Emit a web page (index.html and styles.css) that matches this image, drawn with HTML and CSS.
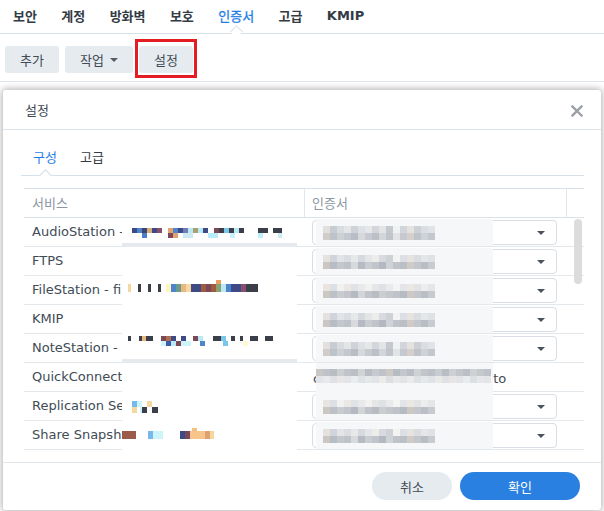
FILE: index.html
```html
<!DOCTYPE html>
<html lang="ko">
<head>
<meta charset="utf-8">
<title>인증서 설정</title>
<link rel="stylesheet" href="styles.css">
</head>
<body>
<div class="page">
  <nav class="topnav">
    <span class="tab">보안</span>
    <span class="tab">계정</span>
    <span class="tab">방화벽</span>
    <span class="tab">보호</span>
    <span class="tab active">인증서</span>
    <span class="tab">고급</span>
    <span class="tab">KMIP</span>
  </nav>
  <div class="toolbar">
    <button class="tbtn w54">추가</button>
    <button class="tbtn w68">작업 <span class="caret-sm"></span></button>
    <button class="tbtn w54 marked">설정</button>
  </div>

  <div class="dialog">
    <div class="dlg-head">
      <span class="dlg-title">설정</span>
      <svg class="close" width="12" height="12" viewBox="0 0 12 12"><path d="M1.5 1.5L10.5 10.5M10.5 1.5L1.5 10.5" stroke="#9aa0a6" stroke-width="2.4" stroke-linecap="square"/></svg>
    </div>
    <div class="dlg-body">
      <div class="subtabs">
        <span class="stab active">구성</span>
        <span class="stab">고급</span>
      </div>
      <div class="grid">
        <div class="thead">
          <div class="c1 th">서비스</div>
          <div class="c2 th">인증서</div>
          <div class="c3"></div>
        </div>
        <div class="tbody">
          <div class="row"><div class="c1">AudioStation -</div><div class="c2"><div class="select"><span class="blur b1"></span><span class="arrow"></span></div></div><div class="c3"></div></div>
          <div class="row"><div class="c1">FTPS</div><div class="c2"><div class="select"><span class="blur b2"></span><span class="arrow"></span></div></div><div class="c3"></div></div>
          <div class="row"><div class="c1">FileStation - fi</div><div class="c2"><div class="select"><span class="blur b3"></span><span class="arrow"></span></div></div><div class="c3"></div></div>
          <div class="row"><div class="c1">KMIP</div><div class="c2"><div class="select"><span class="blur b2"></span><span class="arrow"></span></div></div><div class="c3"></div></div>
          <div class="row"><div class="c1">NoteStation -</div><div class="c2"><div class="select"><span class="blur b1"></span><span class="arrow"></span></div></div><div class="c3"></div></div>
          <div class="row"><div class="c1">QuickConnect</div><div class="c2 plain">c<span class="blur bq"></span>to</div><div class="c3"></div></div>
          <div class="row"><div class="c1">Replication Se</div><div class="c2"><div class="select"><span class="blur b3"></span><span class="arrow"></span></div></div><div class="c3"></div></div>
          <div class="row"><div class="c1">Share Snapsh</div><div class="c2"><div class="select"><span class="blur b2"></span><span class="arrow"></span></div></div><div class="c3"></div></div>

          <div class="mask">
            <span class="px p-audio"></span>
            <span class="band band-audio"></span>
            <span class="px p-file"></span>
            <span class="px p-note"></span>
            <span class="band band-note"></span>
            <span class="px p-repl"></span>
            <span class="px p-share"></span>
          </div>
          <div class="scrollbar"></div>
        </div>
      </div>
    </div>
    <div class="dlg-foot">
      <button class="pill cancel">취소</button>
      <button class="pill ok">확인</button>
    </div>
  </div>
</div>
</body>
</html>
```

FILE: styles.css
```css
* { box-sizing: border-box; }
html, body { margin: 0; padding: 0; }
body {
  width: 604px;
  height: 511px;
  overflow: hidden;
  background: #fff;
  font-family: "DejaVu Sans", "Noto Sans CJK KR", sans-serif;
  font-size: 13px;
  color: #414b55;
}
.page { position: relative; width: 604px; height: 511px; }

/* top tabs */
.topnav {
  height: 34px;
  border-bottom: 1px solid #d9e1e8;
  display: flex;
  align-items: center;
  gap: 24.4px;
  padding: 0 0 2px 13px;
  font-weight: bold;
  font-family: "Noto Sans CJK KR", "DejaVu Sans", sans-serif;
}
.tab { position: relative; color: #333b45; line-height: 18px; }
.topnav .tab:last-child { font-family: "DejaVu Sans", sans-serif; }
.tab.active { color: #1f7ee6; font-weight: normal; -webkit-text-stroke: 0.3px #1f7ee6; }
.tab.active::after {
  content: "";
  position: absolute;
  left: 50%;
  bottom: -11px;
  width: 8px;
  height: 8px;
  margin-left: -4px;
  background: #fff;
  border-left: 1px solid #d9e1e8;
  border-top: 1px solid #d9e1e8;
  transform: rotate(45deg);
}

/* toolbar */
.toolbar {
  display: flex;
  gap: 6px;
  padding: 12px 0 8px 5px;
  border-bottom: 1px solid #dfe4ea;
}
.tbtn {
  height: 27px;
  padding: 0;
  border: 0;
  border-radius: 3px;
  background: #e6ebf0;
  color: #414b55;
  font-family: "Noto Sans CJK KR", sans-serif;
  font-size: 13px;
  display: inline-flex;
  align-items: center;
  justify-content: center;
  gap: 4px;
}
.w54 { width: 54px; }
.w68 { width: 68px; }
.caret-sm {
  display: inline-block;
  border-left: 4px solid transparent;
  border-right: 4px solid transparent;
  border-top: 4px solid #555c66;
  margin-left: 2px;
}
.marked { position: relative; }
.marked::after {
  content: "";
  position: absolute;
  left: -4px;
  right: -4px;
  top: -7px;
  bottom: -5px;
  border: 3px solid #e41d25;
}

/* dialog */
.dialog {
  position: absolute;
  left: 3px;
  top: 90px;
  width: 598px;
  height: 420px;
  background: #fff;
  border-radius: 3px;
  box-shadow: 0 0 7px 1px rgba(0, 0, 0, 0.32);
  display: flex;
  flex-direction: column;
}
.dlg-head {
  height: 40px;
  border-bottom: 1px solid #dde4ea;
  display: flex;
  align-items: center;
  justify-content: space-between;
  padding: 0 18px 0 22px;
  flex: none;
}
.dlg-title { font-family: "Noto Sans CJK KR", sans-serif; font-size: 13px; color: #3e4650; }
.close { display: block; margin-top: 2px; }

.dlg-body {
  flex: 1;
  padding: 0 17px 0 18px;
  border-bottom: 1px solid #e1e6eb;
}
.subtabs {
  display: flex;
  align-items: flex-start;
  gap: 23px;
  padding: 18px 0 0 12px;
  height: 46px;
  border-bottom: 1px solid #d6e1ea;
  font-family: "Noto Sans CJK KR", sans-serif;
  font-size: 13px;
  line-height: 18px;
  color: #333b45;
}
.stab { position: relative; }
.stab.active { color: #1f7ee6; }
.stab.active::after {
  content: "";
  position: absolute;
  left: 50%;
  bottom: -14px;
  width: 8px;
  height: 8px;
  margin-left: -4px;
  background: #fff;
  border-left: 1px solid #cfdbe6;
  border-top: 1px solid #cfdbe6;
  transform: rotate(45deg);
}

.grid {
  margin: 12px 0 0 3px;
  border-top: 1px solid #d9e1e8;
}
.thead, .row {
  display: grid;
  grid-template-columns: 281px 262px 17px;
  height: 29px;
  border-bottom: 1px solid #e3e8ed;
}
.thead { border-bottom-color: #d9e1e8; }
.thead .c1, .thead .c2 { border-right: 1px solid #e1e7ec; }
.th {
  font-family: "Noto Sans CJK KR", sans-serif;
  color: #8c97a3;
  padding-left: 8px;
  line-height: 28px;
}
.th.c2 { padding-left: 7px; }
.tbody { position: relative; }
.row .c1 {
  padding-left: 8px;
  line-height: 28px;
  white-space: nowrap;
  overflow: hidden;
}
.row .c2 { display: flex; align-items: center; padding-left: 7px; }
.row .c2.plain { padding-left: 8px; line-height: 28px; white-space: nowrap; }

.select {
  position: relative;
  width: 245px;
  height: 25px;
  border: 1px solid #d8dee4;
  border-radius: 4px;
  background: #fff;
}
.arrow {
  position: absolute;
  right: 11px;
  top: 10px;
  border-left: 4px solid transparent;
  border-right: 4px solid transparent;
  border-top: 4px solid #4a525c;
}

/* redaction blocks */
.blur {
  position: absolute;
  left: 3px;
  top: -2px;
  width: 177px;
  height: 27px;
  background-color: #f5f7f9;
  background-repeat: no-repeat;
  background-size: 112px 7px, 112px 7px;
  background-position: 7px 7px, 7px 14px;
}
.b1 {
  background-image:
    linear-gradient(90deg, #e2dfdc 0 7px, #c7ccd3 7px 14px, #d8dbdf 14px 21px, #e4e5e7 21px 28px, #cfd3d8 28px 35px, #dde0e4 35px 42px, #e6e7e8 42px 49px, #d3d6da 49px 56px, #e3e4e6 56px 63px, #c5c9cf 63px 70px, #f0f1f2 70px 77px, #d2d5da 77px 84px, #e6e2de 84px 91px, #cdd1d6 91px 98px, #dadde1 98px 105px, #e2e3e6 105px 112px),
    linear-gradient(90deg, #d0ccc8 0 7px, #bec3ca 7px 14px, #cdd0d5 14px 21px, #c3c7ce 21px 28px, #b9bec6 28px 35px, #d6d8dc 35px 42px, #c7cad0 42px 49px, #bcc1c8 49px 56px, #d3d5d9 56px 63px, #c0c5cc 63px 70px, #e2e3e5 70px 77px, #c6c9cf 77px 84px, #d5d0cb 84px 91px, #bfc3ca 91px 98px, #cfd2d7 98px 105px, #c4c8ce 105px 112px);
}
.b2 {
  background-image:
    linear-gradient(90deg, #e6e1dc 0 7px, #d1d5db 7px 14px, #e2e4e7 14px 21px, #dadde1 21px 28px, #e7e8ea 28px 35px, #d6d9de 35px 42px, #e3e5e7 42px 49px, #ecece9 49px 56px, #d7dade 56px 63px, #ced2d7 63px 70px, #f3f3f4 70px 77px, #dcdfe3 77px 84px, #e7e3df 84px 91px, #d9dce0 91px 98px, #e5e6e8 98px 105px, #dfe1e4 105px 112px),
    linear-gradient(90deg, #cbc6c1 0 7px, #b8bdc5 7px 14px, #c4c8cd 14px 21px, #bec2c9 21px 28px, #d7d9dc 28px 35px, #b6bbc3 35px 42px, #c9ccd1 42px 49px, #c1c5cb 49px 56px, #b4b9c1 56px 63px, #cfd2d6 63px 70px, #c0c4ca 70px 77px, #bbc0c7 77px 84px, #d0cbc6 84px 91px, #c3c7cd 91px 98px, #b9bec5 98px 105px, #c8cbd0 105px 112px);
}
.b3 {
  background-image:
    linear-gradient(90deg, #e9e4df 0 7px, #dcdfe3 7px 14px, #f1f1f2 14px 21px, #eae7e4 21px 28px, #e0e2e5 28px 35px, #e8e9ea 35px 42px, #f2f1ef 42px 49px, #e5e6e8 49px 56px, #dfe1e4 56px 63px, #e9eaeb 63px 70px, #f4f4f5 70px 77px, #e3e5e8 77px 84px, #ebe7e3 84px 91px, #e1e3e6 91px 98px, #eceded 98px 105px, #e4e6e8 105px 112px),
    linear-gradient(90deg, #cdc7c1 0 7px, #bcc1c8 7px 14px, #c8cbd0 14px 21px, #c2c6cc 21px 28px, #b5bac2 28px 35px, #d2d4d7 35px 42px, #c0c4ca 42px 49px, #b8bdc4 49px 56px, #cbcdd1 56px 63px, #c4c8cd 63px 70px, #bfc3c9 70px 77px, #b6bbc3 77px 84px, #cdc8c3 84px 91px, #c3c6cc 91px 98px, #babfc6 98px 105px, #c7cacf 105px 112px);
}
.blur.bq {
  position: relative;
  display: inline-block;
  left: 0;
  top: 0;
  width: 177px;
  height: 32px;
  vertical-align: middle;
  margin-left: -4px;
  background-size: 175px 7px, 175px 7px;
  background-position: 0 6px, 0 13px;
  background-image:
    linear-gradient(90deg, #c9c6c3 0 7px, #bfc3c9 7px 14px, #b8bdc4 14px 21px, #ccced2 21px 28px, #c1c5cb 28px 35px, #bcc0c6 35px 42px, #d2d3d6 42px 49px, #b9bec5 49px 56px, #c6c9cd 56px 63px, #bfc3c9 63px 70px, #cdc9c5 70px 77px, #b7bcc3 77px 84px, #c4c7cc 84px 91px, #babec5 91px 98px, #d0d1d4 98px 105px, #c2c5ca 105px 112px, #bdc1c7 112px 119px, #c8cbcf 119px 126px, #b9bdc4 126px 133px, #cfd0d3 133px 140px, #c3c6cb 140px 147px, #bcc0c6 147px 154px, #ced0d3 154px 161px, #c5c8cc 161px 168px, #bfc2c8 168px 175px),
    linear-gradient(90deg, #e3e4e6 0 7px, #e8e9eb 7px 14px, #dfe1e4 14px 21px, #e9e7e5 21px 28px, #e2e4e7 28px 35px, #ebeced 35px 42px, #dfe2e5 42px 49px, #e6e7e9 49px 56px, #e1e3e6 56px 63px, #ecebea 63px 70px, #dde0e3 70px 77px, #e7e8ea 77px 84px, #e2e4e6 84px 91px, #eaeaeb 91px 98px, #dee1e4 98px 105px, #e6e7e9 105px 112px, #e0e2e5 112px 119px, #e9e9ea 119px 126px, #dfe1e4 126px 133px, #e7e6e5 133px 140px, #e1e3e6 140px 147px, #eaebec 147px 154px, #dde0e3 154px 161px, #e6e7e8 161px 168px, #e2e4e6 168px 175px);
}

.mask {
  position: absolute;
  left: 98px;
  top: 0;
  width: 175px;
  height: 232px;
  background: #fff;
}
.px {
  position: absolute;
  display: block;
  background-repeat: no-repeat;
}
.band { position: absolute; left: 0; width: 175px; height: 4px; background: #e6e9ed; display: block; }
.band-audio { top: 25px; }
.band-note { top: 141px; }
.p-audio {
  left: 10px; top: 10px; width: 150px; height: 12px;
  background-image:
    linear-gradient(90deg, #3d4a86 0 5px, #4d85cc 5px 10px, #3a4774 10px 15px, #d8ac78 15px 20px, #3d4a86 20px 25px, #88506a 25px 30px, transparent 30px 36px, #e3a26e 36px 41px, #4d85cc 41px 46px, #3d4a86 46px 51px, #6f7fb5 51px 56px, #b9e9f5 56px 61px, #a8a070 61px 66px, #b9e9f5 66px 71px, #3d4a86 71px 76px, transparent 76px 82px, #7b4858 82px 87px, #3a3f4a 87px 92px, #79c8ec 92px 97px, #3a3f4a 97px 102px, #b9e9f5 102px 107px, #3a3f4a 107px 112px, transparent 112px 126px, #3a3f4a 126px 136px, transparent 136px 141px, #3a3f4a 141px 146px),
    linear-gradient(90deg, transparent 0 10px, #4a7fc6 10px 15px, transparent 15px 36px, #7f4858 36px 41px, #e0a070 41px 46px, transparent 46px 51px, #cdeaf4 51px 61px, transparent 61px 76px, #b6ecfb 76px 86px, transparent 86px 98px, #c8f2fb 98px 103px, transparent 103px 126px, #bfeefa 126px 131px, transparent 131px 146px, #cdeaf4 146px 150px);
  background-size: 150px 5px, 150px 5px;
  background-position: 0 0, 0 5px;
}
.p-file {
  left: 6px; top: 62px; width: 130px; height: 12px;
  background-image:
    linear-gradient(90deg, transparent 0 88px, #e8a060 88px 93px, transparent 93px 130px),
    linear-gradient(90deg, #f5d8a0 0 3px, transparent 3px 10px, #3a3f4a 10px 13px, transparent 13px 20px, #3a3f4a 20px 23px, transparent 23px 30px, #3a3f4a 30px 33px, transparent 33px 38px, #fff3c0 38px 43px, #4d85cc 43px 48px, #6b9a90 48px 53px, #e8b880 53px 58px, #f5d8a0 58px 63px, #3d4a86 63px 73px, #a05a40 73px 78px, #7b4858 78px 83px, #a05a40 83px 88px, #8aa070 88px 93px, #b9e9f5 93px 98px, #4d85cc 98px 103px, #3d4a86 103px 113px, #88506a 113px 118px, #3a3f4a 118px 123px);
  background-size: 130px 4px, 130px 8px;
  background-position: 0 0, 0 4px;
}
.p-note {
  left: 6px; top: 118px; width: 145px; height: 13px;
  background-image:
    linear-gradient(90deg, #3a3f4a 0 3px, transparent 3px 11px, #3a3f4a 11px 14px, #e8b880 14px 18px, #3a3f4a 18px 25px, transparent 25px 33px, #7b4858 33px 38px, #b07050 38px 43px, #3d4a86 43px 48px, transparent 48px 53px, #3d4a86 53px 58px, transparent 58px 65px, #7b4858 65px 70px, #b9e9f5 70px 75px, transparent 75px 85px, #3a3f4a 85px 93px, #79c8ec 93px 98px, transparent 98px 103px, #3a3f4a 103px 107px, transparent 107px 112px, #3a3f4a 112px 115px, transparent 115px 122px, #3a3f4a 122px 130px, transparent 130px 137px, #3a3f4a 137px 141px),
    linear-gradient(90deg, transparent 0 33px, #cdf4fb 33px 38px, #3d5aa8 38px 43px, #b9e9f5 43px 48px, #7b4858 48px 53px, #cdf4fb 53px 63px, transparent 63px 72px, #4d85cc 72px 77px, transparent 77px 95px, #79c8ec 95px 100px, transparent 100px 115px, #fff8d0 115px 120px, transparent 120px 145px);
  background-size: 145px 5px, 145px 5px;
  background-position: 0 0, 0 5px;
}
.p-repl {
  left: 10px; top: 183px; width: 26px; height: 12px;
  background-image:
    linear-gradient(90deg, #79b8ec 0 5px, #cdf4fb 5px 10px, transparent 10px 15px, #f5d8a0 15px 20px, transparent 20px 26px),
    linear-gradient(90deg, #f5d8a0 0 5px, transparent 5px 8px, #cdf4fb 8px 10px, #3a3f4a 10px 15px, transparent 15px 20px, #3a3f4a 20px 25px);
  background-size: 26px 6px, 26px 6px;
  background-position: 0 0, 0 6px;
}
.p-share {
  left: 0; top: 210px; width: 92px; height: 11px;
  background-image:
    linear-gradient(90deg, transparent 0 70px, #f5c080 70px 75px, transparent 75px 92px),
    linear-gradient(90deg, #9c5a48 0 14px, transparent 14px 26px, #79b8ec 26px 31px, #cdf4fb 31px 41px, transparent 41px 58px, #3d4a86 58px 63px, #7b4858 63px 68px, #f7c58c 68px 83px, #e0a070 83px 88px, #f5d8a0 88px 92px);
  background-size: 92px 3px, 92px 8px;
  background-position: 0 0, 0 3px;
}

.scrollbar {
  position: absolute;
  left: 550px;
  top: 1px;
  width: 8px;
  height: 65px;
  border-radius: 4px;
  background: #dcdcdc;
}

/* footer */
.dlg-foot {
  flex: none;
  height: 47px;
  display: flex;
  justify-content: flex-end;
  align-items: flex-start;
  gap: 8px;
  padding: 9px 21px 0 0;
}
.pill {
  height: 28px;
  border: 0;
  border-radius: 14px;
  font-family: "Noto Sans CJK KR", sans-serif;
  font-size: 13px;
}
.cancel { width: 80px; background: #e6ebf0; color: #414b55; }
.ok { width: 120px; background: #2a80e0; color: #fff; }
```
